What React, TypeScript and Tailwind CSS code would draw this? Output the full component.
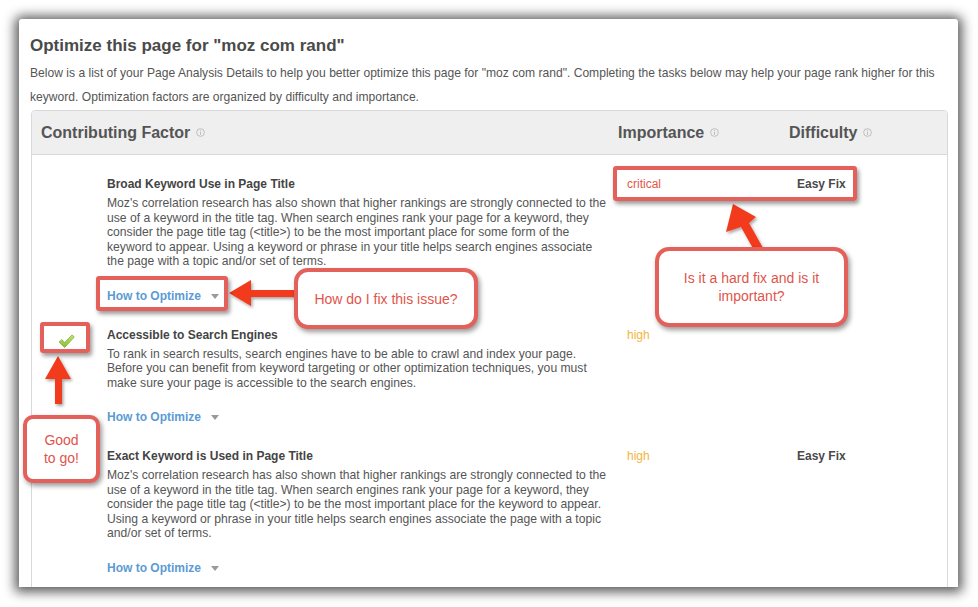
import React from 'react';

const factors = [
  {
    id: 'broad',
    title: 'Broad Keyword Use in Page Title',
    lines: [
      "Moz's correlation research has also shown that higher rankings are strongly connected to the",
      'use of a keyword in the title tag. When search engines rank your page for a keyword, they',
      'consider the page title tag (<title>) to be the most important place for some form of the',
      'keyword to appear. Using a keyword or phrase in your title helps search engines associate',
      'the page with a topic and/or set of terms.',
    ],
    importance: 'critical',
    difficulty: 'Easy Fix',
    passed: false,
  },
  {
    id: 'accessible',
    title: 'Accessible to Search Engines',
    lines: [
      'To rank in search results, search engines have to be able to crawl and index your page.',
      'Before you can benefit from keyword targeting or other optimization techniques, you must',
      'make sure your page is accessible to the search engines.',
    ],
    importance: 'high',
    difficulty: '',
    passed: true,
  },
  {
    id: 'exact',
    title: 'Exact Keyword is Used in Page Title',
    lines: [
      "Moz's correlation research has also shown that higher rankings are strongly connected to the",
      'use of a keyword in the title tag. When search engines rank your page for a keyword, they',
      'consider the page title tag (<title>) to be the most important place for the keyword to appear.',
      'Using a keyword or phrase in your title helps search engines associate the page with a topic',
      'and/or set of terms.',
    ],
    importance: 'high',
    difficulty: 'Easy Fix',
    passed: false,
  },
];

function InfoIcon() {
  return (
    <svg width="9" height="9" viewBox="0 0 10 10" className="ml-[6px] inline-block">
      <circle cx="5" cy="5" r="4.3" fill="none" stroke="#b5b5b5" strokeWidth="0.9" />
      <rect x="4.5" y="4.2" width="1" height="3.3" fill="#b5b5b5" />
      <rect x="4.5" y="2.4" width="1" height="1" fill="#b5b5b5" />
    </svg>
  );
}

function Check() {
  return (
    <svg width="17" height="15" viewBox="0 0 16 14">
      <defs>
        <linearGradient id="chk" x1="0" y1="0" x2="0" y2="1">
          <stop offset="0" stopColor="#c2e86a" />
          <stop offset="1" stopColor="#86bd3a" />
        </linearGradient>
      </defs>
      <path
        d="M1 7.5 L3.6 5.2 L6.2 8 L13.3 0.8 L15.3 2.8 L6.2 12.6 Z"
        fill="url(#chk)"
        stroke="#78a632"
        strokeWidth="0.7"
        strokeLinejoin="round"
      />
    </svg>
  );
}

export default function App() {
  return (
    <div
      className="relative w-[978px] h-[607px] bg-white overflow-hidden pt-[19px] pl-[19px]"
      style={{ fontFamily: '"Liberation Sans", Arial, sans-serif' }}
    >
      {/* window */}
      <div className="w-[939px] h-[568px] bg-white overflow-hidden rounded-tl-[3px] rounded-tr-[3px] shadow-[0_1px_12px_4px_rgba(0,0,0,0.65)]">
        <div className="pl-[11px] pt-[17px]">
          <h1 className="text-[17px] leading-[20px] font-bold text-[#4a4a4a]">
            Optimize this page for "moz com rand"
          </h1>
          <p className="mt-[5px] text-[12.1px] leading-[24px] text-[#555] whitespace-nowrap">
            Below is a list of your Page Analysis Details to help you better optimize this page for "moz com rand". Completing the tasks below may help your page rank higher for this
            <br />
            keyword. Optimization factors are organized by difficulty and importance.
          </p>
        </div>

        {/* table */}
        <div className="ml-[12px] mt-px w-[917px] h-[600px] border border-[#d9d9d9] rounded-t-[4px]">
          <div className="flex items-center h-[44px] bg-[#efefef] border-b border-[#d9d9d9] rounded-t-[4px] pl-[9px] text-[16px] font-bold text-[#555]">
            <div className="w-[577px] flex items-center">
              Contributing Factor
              <InfoIcon />
            </div>
            <div className="w-[171px] flex items-center">
              Importance
              <InfoIcon />
            </div>
            <div className="flex items-center">
              Difficulty
              <InfoIcon />
            </div>
          </div>

          <div className="pt-[22px] flex flex-col gap-[24px]">
            {factors.map((f) => (
              <div key={f.id} className="flex">
                <div className="w-[75px] flex justify-center pt-[6px]">
                  {f.passed && (
                    <div className="ml-[-6px]">
                      <Check />
                    </div>
                  )}
                </div>
                <div className="w-[520px]">
                  <div className="text-[12px] leading-[15px] font-bold text-[#444]">{f.title}</div>
                  <div className="mt-[4px] text-[12.15px] leading-[14.5px] text-[#555] whitespace-nowrap">
                    {f.lines.map((l, i) => (
                      <div key={i}>{l}</div>
                    ))}
                  </div>
                  <div className="mt-[20px] flex items-center text-[12px] leading-[15px] font-bold text-[#5b9bd5]">
                    How to Optimize
                    <svg width="8" height="5" viewBox="0 0 8 5" className="ml-[10px]">
                      <path d="M0 0 L8 0 L4 5 Z" fill="#9a9a9a" />
                    </svg>
                  </div>
                </div>
                <div
                  className={`w-[170px] text-[12px] leading-[15px] ${
                    f.importance === 'critical' ? 'text-[#e4544b]' : 'text-[#f2b640]'
                  }`}
                >
                  {f.importance}
                </div>
                <div className="text-[12px] leading-[15px] font-bold text-[#4a4a4a]">{f.difficulty}</div>
              </div>
            ))}
          </div>
        </div>
      </div>

      {/* annotation arrows */}
      <svg className="absolute left-0 top-0 pointer-events-none" width="978" height="607" viewBox="0 0 978 607">
        <defs>
          <filter id="ash" x="-30%" y="-30%" width="160%" height="160%">
            <feDropShadow dx="1.5" dy="2" stdDeviation="1.5" floodColor="#000" floodOpacity="0.35" />
          </filter>
        </defs>
        <g fill="#f23a1d" filter="url(#ash)">
          {/* up-left arrow to importance box */}
          <polygon points="733,204 726,232 741,227 755,252 763,248 749,223 756,217" />
          {/* left arrow to how-to box */}
          <polygon points="229,293 251,280 251,290 298,290 298,297 251,297 251,306" />
          {/* up arrow to check box */}
          <polygon points="58,356 45,379 55,379 55,404 62,404 62,379 71,379" />
        </g>
      </svg>

      {/* annotation boxes */}
      <div className="absolute left-[613px] top-[166px] w-[244px] h-[35px] border-[4px] border-[#e4605a] rounded-[3px] shadow-[2px_3px_4px_rgba(0,0,0,0.4)]" />
      <div className="absolute left-[96px] top-[276px] w-[132px] h-[35px] border-[4px] border-[#e4605a] rounded-[3px] shadow-[2px_3px_4px_rgba(0,0,0,0.4)]" />
      <div className="absolute left-[40px] top-[322px] w-[50px] h-[31px] border-[4px] border-[#e4605a] rounded-[3px] shadow-[2px_3px_4px_rgba(0,0,0,0.4)]" />

      {/* callouts */}
      <div className="absolute left-[655px] top-[247px] w-[193px] h-[80px] bg-white border-[4px] border-[#e4605a] rounded-[14px] shadow-[2px_3px_5px_rgba(0,0,0,0.4)] flex items-center justify-center text-center text-[14px] leading-[18px] text-[#e0554b]">
        <span className="w-[150px]">Is it a hard fix and is it important?</span>
      </div>
      <div className="absolute left-[294px] top-[268px] w-[184px] h-[61px] bg-white border-[4px] border-[#e4605a] rounded-[14px] shadow-[2px_3px_5px_rgba(0,0,0,0.4)] flex items-center justify-center text-[14px] leading-[18px] text-[#e0554b]">
        How do I fix this issue?
      </div>
      <div className="absolute left-[23px] top-[415px] w-[77px] h-[68px] bg-white border-[4px] border-[#e4605a] rounded-[10px] shadow-[2px_3px_5px_rgba(0,0,0,0.4)] flex items-center justify-center text-center text-[14px] leading-[18px] text-[#e0554b]">
        <span>
          Good
          <br />
          to go!
        </span>
      </div>
    </div>
  );
}
